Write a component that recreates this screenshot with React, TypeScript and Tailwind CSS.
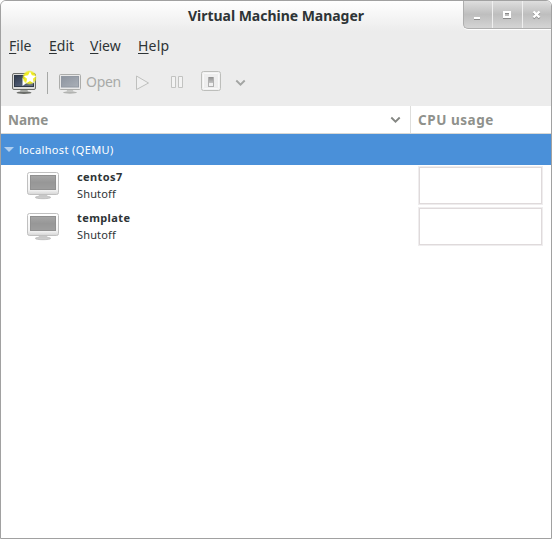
import React from "react";

function NewVmIcon() {
  return (
    <svg width="26" height="25" viewBox="0 0 26 25" className="block">
      <defs>
        <linearGradient id="nvScreen" x1="0" y1="0" x2="1" y2="1">
          <stop offset="0" stopColor="#2f3949" />
          <stop offset=".45" stopColor="#47536a" />
          <stop offset="1" stopColor="#6c7687" />
        </linearGradient>
        <radialGradient id="glow">
          <stop offset=".6" stopColor="#f2ee1c" />
          <stop offset=".8" stopColor="#f2ee1c" stopOpacity=".8" />
          <stop offset="1" stopColor="#f6f36a" stopOpacity="0" />
        </radialGradient>
      </defs>
      <ellipse cx="12" cy="22.700" rx="7.500" ry="1.300" fill="#6b6d69" />
      <path d="M8.500 20h7l.6 2h-8.200z" fill="#a5a7a3" />
      <rect x=".5" y="3.500" width="23" height="16" rx="1.500" fill="#dcdcda" stroke="#6c6e6a" />
      <rect x="2.500" y="5.500" width="19" height="11" fill="url(#nvScreen)" stroke="#303a49" />
      <path d="M10.500 8l5.500 4-5.500 4z" fill="#fff" />
      <circle cx="17.500" cy="7.500" r="7.500" fill="url(#glow)" />
      <path d="M18 1.500l1.900 3.800 4.300.6-3.200 2.900.8 4.500-3.800-2.200-3.800 2.200.8-4.500-3.200-2.900 4.300-.6z" fill="#fff" />
    </svg>
  );
}

function OpenIcon() {
  return (
    <svg width="22" height="21" viewBox="0 0 22 21" className="block">
      <defs>
        <linearGradient id="opScreen" x1="0" y1="0" x2="1" y2="1">
          <stop offset="0" stopColor="#8d949f" />
          <stop offset="1" stopColor="#aab0b8" />
        </linearGradient>
      </defs>
      <ellipse cx="11" cy="18.500" rx="7" ry="1.200" fill="#b2b3b1" />
      <path d="M8 16h6l.5 2h-7z" fill="#c4c5c3" />
      <rect x=".5" y=".5" width="21" height="15" rx="1" fill="#e8e8e8" stroke="#acadab" />
      <rect x="2.500" y="2.500" width="17" height="10.500" fill="url(#opScreen)" stroke="#9299a3" />
    </svg>
  );
}

function GuestIcon() {
  return (
    <svg width="32" height="28" viewBox="0 0 32 28" className="block">
      <defs>
        <linearGradient id="gsScreen" x1="0" y1="0" x2="0" y2="1">
          <stop offset="0" stopColor="#a6a6a6" />
          <stop offset=".5" stopColor="#979797" />
          <stop offset="1" stopColor="#9e9e9e" />
        </linearGradient>
        <linearGradient id="gsFrame" x1="0" y1="0" x2="0" y2="1">
          <stop offset="0" stopColor="#ffffff" />
          <stop offset=".8" stopColor="#f2f2f2" />
          <stop offset="1" stopColor="#d4d4d4" />
        </linearGradient>
      </defs>
      <ellipse cx="16" cy="25.400" rx="7.700" ry="1.300" fill="#cccccc" stroke="#b8b8b8" strokeWidth=".8" />
      <path d="M12 22.500h8l.5 2.500h-9z" fill="#c8c8c8" />
      <rect x=".5" y=".5" width="31" height="22" rx="2" fill="url(#gsFrame)" stroke="#c0c0c0" />
      <rect x="3.500" y="3.500" width="25" height="14" fill="url(#gsScreen)" stroke="#909090" />
    </svg>
  );
}

function Chevron({ color }: { color: string }) {
  return (
    <svg width="12" height="8" viewBox="0 0 12 8" className="block">
      <path d="M1.300 1.500L5.500 5.700l4.200-4.200" fill="none" stroke={color} strokeWidth="1.900" />
    </svg>
  );
}

function TitleBar() {
  return (
    <div className="flex h-[30px] shrink-0 bg-linear-to-b from-white to-[#ececec]">
      <div className="w-[462px] pt-[5px] pl-[187px] text-[14px] leading-[20px] font-bold text-[#2e3436]">
        <span className="tracking-[-0.03px]">Virtual Machine Manager</span>
      </div>
      <div className="flex h-[28px] w-[88px] rounded-bl-[5px] border-b border-l border-[#aeaeae] bg-linear-to-b from-[#dedede] via-[#bebebe] to-[#d4d4d4] shadow-[0_1px_0_#fff]">
        <div className="flex w-[29px] border-r border-[#efefef] pt-[8px] pl-[7px]">
          <svg width="14" height="12" viewBox="0 0 14 12">
            <path d="M3 9h6v2H3z" fill="#8a8a8a" />
            <path d="M3 8h6v2H3z" fill="#fff" />
          </svg>
        </div>
        <div className="flex w-[30px] border-r border-[#efefef] pt-[8px] pl-[7px]">
          <svg width="14" height="12" viewBox="0 0 14 12">
            <path d="M4 4h6v5H4z" fill="none" stroke="#8a8a8a" strokeWidth="2" />
            <path d="M4 3h6v5H4z" fill="none" stroke="#fff" strokeWidth="2" />
          </svg>
        </div>
        <div className="flex w-[28px] pt-[8px] pl-[7px]">
          <svg width="14" height="12" viewBox="0 0 14 12">
            <path d="M3.500 3.500l6 6M9.500 3.500l-6 6" stroke="#8a8a8a" strokeWidth="2.400" />
            <path d="M3.500 2.500l6 6M9.500 2.500l-6 6" stroke="#fff" strokeWidth="2.400" />
          </svg>
        </div>
      </div>
    </div>
  );
}

function MenuBar() {
  return (
    <div className="flex h-[31px] shrink-0 pt-[5px] pl-2 text-[14px] leading-[20px] text-[#2e3436]">
      <span className="w-[40px]"><u className="underline-offset-2">F</u>ile</span>
      <span className="w-[41px]"><u className="underline-offset-2">E</u>dit</span>
      <span className="w-[48px]"><u className="underline-offset-2">V</u>iew</span>
      <span className="tracking-[0.2px]"><u className="underline-offset-2">H</u>elp</span>
    </div>
  );
}

function ToolBar() {
  return (
    <div className="flex h-[44px] shrink-0 items-start pl-[11px]">
      <div className="mt-[8px] w-[26px]"><NewVmIcon /></div>
      <div className="mt-[10px] ml-[9px] h-[22px] w-px bg-[#a6a8a6]" />
      <div className="mt-[12px] ml-[11px]"><OpenIcon /></div>
      <span className="mt-[10px] ml-[5px] w-[49px] text-[14px] leading-[20px] tracking-[-0.3px] text-[#a8aaa8]">Open</span>
      <svg width="16" height="18" viewBox="0 0 16 18" className="mt-[12px] block">
        <path d="M1.500 2v13.500L13.500 9z" fill="#f0f0f0" stroke="#bfc0be" />
      </svg>
      <svg width="14" height="14" viewBox="0 0 14 14" className="mt-[13px] ml-[19px] block">
        <path d="M1.500 1.500h4v11h-4zM8.500 1.500h4v11h-4z" fill="#f3f3f3" stroke="#c2c3c1" />
      </svg>
      <svg width="20" height="20" viewBox="0 0 20 20" className="mt-[9px] ml-[17px] block">
        <defs>
          <linearGradient id="switchShade" x1="0" y1="0" x2="0" y2="1">
            <stop offset="0" stopColor="#8f8f8f" />
            <stop offset="1" stopColor="#c4c4c4" />
          </linearGradient>
        </defs>
        <rect x=".5" y=".5" width="19" height="19" rx="2" fill="#f1f1f1" stroke="#bdbebb" />
        <rect x="2.500" y="2.500" width="15" height="15" rx="1" fill="#eeeeee" stroke="#f9f9f9" />
        <rect x="7.500" y="6.500" width="5" height="9" fill="#f0f0f0" stroke="#b0b0b0" />
        <rect x="8" y="6" width="4" height="6" fill="url(#switchShade)" />
      </svg>
      <div className="mt-[17px] ml-[14px]"><Chevron color="#a3a5a3" /></div>
    </div>
  );
}

function GuestRow({ name }: { name: string }) {
  return (
    <div className="flex h-[41px] shrink-0">
      <div className="w-[76px] pt-[7px] pl-[26px]"><GuestIcon /></div>
      <div className="w-[341px] pt-[3px] text-[11px] leading-[17px] text-[#2e3436]">
        <div className="font-bold"><span className="tracking-[0.4px]">{name}</span></div>
        <div><span className="tracking-[0.15px]">Shutoff</span></div>
      </div>
      <div className="mt-[1px] h-[39px] w-[125px] border border-[#efedee]">
        <div className="h-full w-full border border-[#dfdadb] bg-white" />
      </div>
    </div>
  );
}

export default function App() {
  return (
    <div className="flex h-[539px] w-[552px] flex-col overflow-hidden rounded-t-[6px] border border-[#a1a1a1] bg-[#ececec] font-['Noto_Sans','Open_Sans',sans-serif]">
      <TitleBar />
      <MenuBar />
      <ToolBar />
      <div className="flex h-[28px] shrink-0 border-b border-[#d8d8d4] bg-white text-[13.5px] leading-[28px] font-bold text-[#8f918c]">
        <div className="flex w-[410px] border-r border-[#dededc] pl-[7px]">
          <span className="w-[382px]">Name</span>
          <div className="pt-[10px]"><Chevron color="#858783" /></div>
        </div>
        <div className="pl-[7px]"><span className="tracking-[0.55px]">CPU usage</span></div>
      </div>
      <div className="flex h-[31px] shrink-0 items-center bg-[#4a90d9] pl-[3px] text-[11px] text-white">
        <svg width="10" height="5" viewBox="0 0 10 5" className="block"><path d="M0 0h10L5 5z" fill="#b0cff0" /></svg>
        <span className="ml-[5px] pt-[2px] tracking-[0.37px]">localhost (QEMU)</span>
      </div>
      <div className="flex flex-1 flex-col bg-white">
        <GuestRow name="centos7" />
        <GuestRow name="template" />
      </div>
    </div>
  );
}
